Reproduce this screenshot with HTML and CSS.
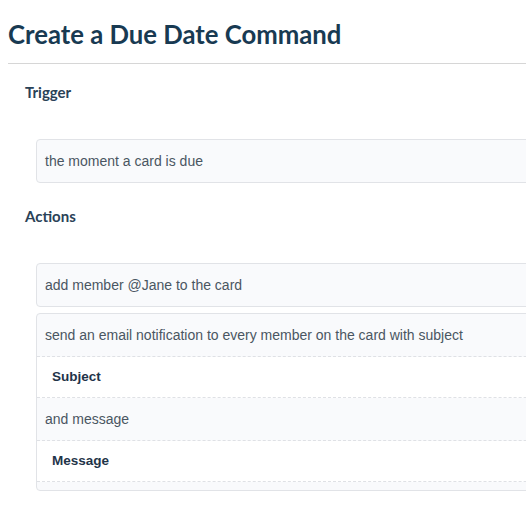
FILE: index.html
```html
<!DOCTYPE html>
<html>
<head>
<meta charset="utf-8">
<link rel="stylesheet" href="styles.css">
</head>
<body>
<div class="page">
  <h1 class="title">Create a Due Date Command</h1>
  <div class="rule"></div>
  <section class="section">
    <h2 class="section-title">Trigger</h2>
    <div class="card">
      <div class="row">the moment a card is due</div>
    </div>
  </section>
  <section class="section">
    <h2 class="section-title">Actions</h2>
    <div class="card">
      <div class="row">add member @Jane to the card</div>
    </div>
    <div class="card">
      <div class="row dashed">send an email notification to every member on the card with subject</div>
      <div class="field dashed">Subject</div>
      <div class="row dashed">and message</div>
      <div class="field dashed">Message</div>
      <div class="tail"></div>
    </div>
  </section>
</div>
</body>
</html>
```

FILE: styles.css
```css
html, body {
  margin: 0;
  padding: 0;
  overflow: hidden;
  background: #ffffff;
}
.page {
  width: 620px;
  padding: 8px 0 0 8px;
}
.title {
  font-family: Lato, "Liberation Sans", sans-serif;
  font-weight: 700;
  font-size: 25.7px;
  line-height: 32px;
  color: #183a52;
  margin: 10px 0 0 0;
}
.rule {
  height: 1px;
  background: #d6d6d6;
  margin-top: 13px;
}
.section {
  padding-left: 17px;
}
.section-title {
  font-family: Lato, "Liberation Sans", sans-serif;
  font-weight: 700;
  font-size: 15px;
  line-height: 20px;
  color: #2a4257;
  margin: 18px 0 0 0;
}
.section + .section .section-title {
  margin-top: 23px;
}
.section-title + .card {
  margin-top: 37px;
}
.card {
  margin-left: 11px;
  border: 1px solid #e1e3e7;
  border-radius: 4px;
  background: #f9fafc;
  overflow: hidden;
}
.card + .card {
  margin-top: 6px;
}
.row {
  font-family: "Liberation Sans", Arial, sans-serif;
  font-size: 14px;
  line-height: 42px;
  height: 42px;
  color: #4a5662;
  padding-left: 8px;
}
.field {
  font-family: "Liberation Sans", Arial, sans-serif;
  font-weight: 700;
  font-size: 13.5px;
  line-height: 40px;
  height: 40px;
  color: #1f3449;
  padding-left: 15px;
  background: #ffffff;
}
.dashed {
  border-bottom: 1px dashed #dfe1e5;
}
.tail {
  height: 8px;
}
```
